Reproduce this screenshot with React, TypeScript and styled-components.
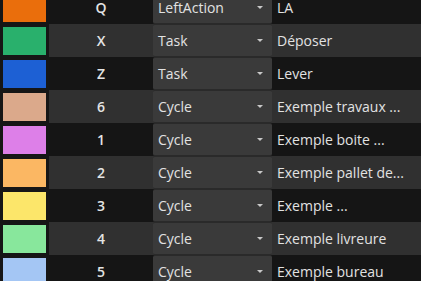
import React from "react";
import styled, { createGlobalStyle } from "styled-components";

const Global = createGlobalStyle`
  html, body {
    margin: 0;
    padding: 0;
    background: #151515;
    overflow: hidden;
  }
  * { box-sizing: border-box; }
`;

const Table = styled.div`
  display: flex;
  flex-direction: column;
  margin-top: -9px;
  width: 421px;
  font-family: "Open Sans", "Noto Sans", sans-serif;
  font-size: 14px;
  color: #e4e4e4;
`;

const Row = styled.div<{ $alt: boolean }>`
  display: grid;
  grid-template-columns: 49px 104px 119px 1fr;
  height: 33px;
  background: ${(p) => (p.$alt ? "#303030" : "#151515")};
`;

const SwatchCell = styled.div`
  background: #161616;
  padding: 3px 3px 2px 3px;
  display: flex;
`;

const Swatch = styled.div<{ $color: string }>`
  flex: 1;
  background: ${(p) => p.$color};
`;

const KeyCell = styled.div`
  display: flex;
  align-items: center;
  justify-content: center;
  font-weight: 600;
  color: #e4e4e4;
`;

const Select = styled.div`
  display: flex;
  align-items: center;
  justify-content: space-between;
  background: #3a3a3a;
  border-top: 1px solid #2a2a2a;
  border-bottom: 1px solid #2a2a2a;
  border-radius: 2px;
  padding: 0 9px 0 5px;
  color: #e2e2e2;
`;

const Arrow = styled.span`
  width: 0;
  height: 0;
  border-left: 3px solid transparent;
  border-right: 3px solid transparent;
  border-top: 3px solid #c8c8c8;
`;

const NameCell = styled.div`
  display: flex;
  align-items: center;
  padding-left: 5px;
  white-space: nowrap;
  overflow: hidden;
  color: #e2e2e2;
`;

const rows = [
  { color: "#ea6e0c", key: "Q", type: "LeftAction", name: "LA" },
  { color: "#29b06c", key: "X", type: "Task", name: "Déposer" },
  { color: "#1d60d4", key: "Z", type: "Task", name: "Lever" },
  { color: "#dba98b", key: "6", type: "Cycle", name: "Exemple travaux ..." },
  { color: "#dd7fe8", key: "1", type: "Cycle", name: "Exemple boite ..." },
  { color: "#fbb763", key: "2", type: "Cycle", name: "Exemple pallet de..." },
  { color: "#fce66a", key: "3", type: "Cycle", name: "Exemple ..." },
  { color: "#88e79c", key: "4", type: "Cycle", name: "Exemple livreure" },
  { color: "#a4c6f4", key: "5", type: "Cycle", name: "Exemple bureau" },
];

export default function App() {
  return (
    <>
      <Global />
      <Table>
        {rows.map((r, i) => (
          <Row key={r.key} $alt={i % 2 === 1}>
            <SwatchCell>
              <Swatch $color={r.color} />
            </SwatchCell>
            <KeyCell>{r.key}</KeyCell>
            <Select>
              <span>{r.type}</span>
              <Arrow />
            </Select>
            <NameCell>{r.name}</NameCell>
          </Row>
        ))}
      </Table>
    </>
  );
}
